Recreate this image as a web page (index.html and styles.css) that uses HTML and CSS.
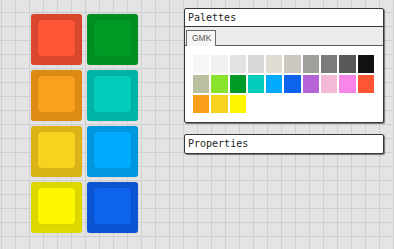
FILE: index.html
```html
<!DOCTYPE html>
<html lang="en">
<head>
    <meta charset="UTF-8">
    <meta name="viewport" content="width=device-width, initial-scale=1.0">
    <title>Keycaps</title>
    <link rel="stylesheet" href="styles.css">
</head>
<body>
    <div class="workspace">
        <div class="keys">
            <div class="key red"><div class="cap"></div></div>
            <div class="key green"><div class="cap"></div></div>
            <div class="key orange"><div class="cap"></div></div>
            <div class="key teal"><div class="cap"></div></div>
            <div class="key gold"><div class="cap"></div></div>
            <div class="key sky"><div class="cap"></div></div>
            <div class="key yellow"><div class="cap"></div></div>
            <div class="key blue"><div class="cap"></div></div>
        </div>

        <div class="side">
            <div class="panel">
                <div class="panel-title">Palettes</div>
                <div class="tabs">
                    <div class="tab">GMK</div>
                </div>
                <div class="panel-body">
                    <div class="swatches">
                        <div class="swatch" style="background:#f6f6f6"></div>
                        <div class="swatch" style="background:#f1f1f1"></div>
                        <div class="swatch" style="background:#e3e3e3"></div>
                        <div class="swatch" style="background:#d8d8d8"></div>
                        <div class="swatch" style="background:#e0ddd4"></div>
                        <div class="swatch" style="background:#cbc8bf"></div>
                        <div class="swatch" style="background:#a09f9b"></div>
                        <div class="swatch" style="background:#7b7b79"></div>
                        <div class="swatch" style="background:#595856"></div>
                        <div class="swatch" style="background:#121212"></div>
                        <div class="swatch" style="background:#b9c0a0"></div>
                        <div class="swatch" style="background:#8ae32b"></div>
                        <div class="swatch" style="background:#009b27"></div>
                        <div class="swatch" style="background:#03ccbb"></div>
                        <div class="swatch" style="background:#00aafd"></div>
                        <div class="swatch" style="background:#0e63ee"></div>
                        <div class="swatch" style="background:#b563d6"></div>
                        <div class="swatch" style="background:#f5b9d8"></div>
                        <div class="swatch" style="background:#f786e8"></div>
                        <div class="swatch" style="background:#fe5535"></div>
                        <div class="swatch" style="background:#f99f1c"></div>
                        <div class="swatch" style="background:#f9d21f"></div>
                        <div class="swatch" style="background:#fff700"></div>
                    </div>
                </div>
            </div>

            <div class="panel props">
                <div class="panel-title">Properties</div>
            </div>
        </div>
    </div>
</body>
</html>
```

FILE: styles.css
```css
html, body {
    height: 100%;
}
body {
    margin: 0;
    background-color: #e4e4e4;
    background-image:
        linear-gradient(to right, #d0d0d0 1px, transparent 1px),
        linear-gradient(to bottom, #d0d0d0 1px, transparent 1px);
    background-size: 14px 14px;
    background-position: 1px 12px;
    font-family: "DejaVu Sans Mono", monospace;
    overflow: hidden;
}
.workspace {
    display: flex;
    align-items: flex-start;
}

/* keycaps */
.keys {
    display: grid;
    grid-template-columns: 51px 51px;
    grid-auto-rows: 51px;
    gap: 5px;
    margin: 14px 0 0 31px;
}
.key {
    box-sizing: border-box;
    padding: 6px 7px 9px 7px;
    border-radius: 3px;
    box-shadow: 0 0 1px rgba(0, 0, 0, 0.25);
}
.cap {
    height: 100%;
    border-radius: 3px;
    box-shadow: 0 0 1px rgba(0, 0, 0, 0.3);
}
.red { background: #d8472e; }
.red .cap { background: #fe5535; }
.green { background: #008d22; }
.green .cap { background: #009b27; }
.orange { background: #de8b15; }
.orange .cap { background: #f9a11c; }
.teal { background: #00b4a5; }
.teal .cap { background: #03ccbb; }
.gold { background: #dbb518; }
.gold .cap { background: #f9d21f; }
.sky { background: #0097df; }
.sky .cap { background: #00aafd; }
.yellow { background: #dfd800; }
.yellow .cap { background: #fff700; }
.blue { background: #0b55d3; }
.blue .cap { background: #0e63ee; }

/* panels */
.side {
    display: flex;
    flex-direction: column;
    gap: 11px;
    margin: 8px 0 0 46px;
}
.panel {
    width: 198px;
    background: #ffffff;
    border: 1px solid #363636;
    border-radius: 2px;
    box-shadow: 1px 1px 1px rgba(0, 0, 0, 0.5);
}
.panel-title {
    height: 17px;
    line-height: 17px;
    padding-left: 3px;
    font-size: 10px;
    color: #222222;
}
.panel > .panel-title:not(:last-child) {
    border-bottom: 1px solid #363636;
}
.props .panel-title {
    height: 18px;
    line-height: 18px;
}
.tabs {
    display: flex;
    align-items: flex-end;
    height: 18px;
    padding-left: 1px;
    background: #ececec;
    border-bottom: 1px solid #5a5a5a;
}
.tab {
    box-sizing: border-box;
    height: 16px;
    margin-bottom: -1px;
    padding: 0 4px 0 5px;
    line-height: 15px;
    background: #f6f6f6;
    border: 1px solid #6a6a6a;
    border-bottom: none;
    font-family: "Liberation Sans", sans-serif;
    font-size: 8.5px;
    color: #555555;
}
.panel-body {
    padding: 9px 9px 9px 8px;
}
.swatches {
    display: grid;
    grid-template-columns: repeat(10, 1fr);
    grid-auto-rows: 18px;
    gap: 2px;
    width: 181px;
}
```
